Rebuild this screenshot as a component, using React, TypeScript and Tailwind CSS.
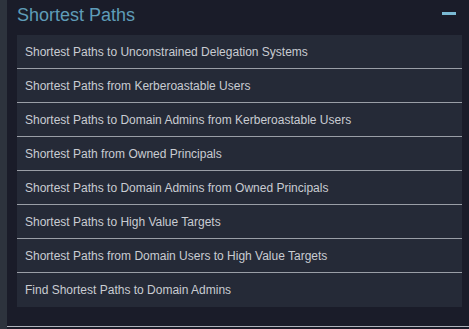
const items = [
  "Shortest Paths to Unconstrained Delegation Systems",
  "Shortest Paths from Kerberoastable Users",
  "Shortest Paths to Domain Admins from Kerberoastable Users",
  "Shortest Path from Owned Principals",
  "Shortest Paths to Domain Admins from Owned Principals",
  "Shortest Paths to High Value Targets",
  "Shortest Paths from Domain Users to High Value Targets",
  "Find Shortest Paths to Domain Admins",
];

export default function App() {
  return (
    <div className="flex h-[329px] w-[469px] overflow-hidden bg-[#1a1c29] font-['Liberation_Sans',Arial,sans-serif]">
      <div className="w-[7px] shrink-0 bg-[#2d333d]" />
      <div className="flex min-w-0 flex-1 flex-col">
        <div className="flex h-[35px] items-center justify-between pl-[10px] pr-[13px]">
          <h2 className="text-[18px] leading-none text-[#5f9cb8] pb-[6px]">Shortest Paths</h2>
          <span className="mb-[8px] block h-[3px] w-[14px] bg-[#7ab9d3]" />
        </div>
        <ul className="ml-[10px] mr-[7px] bg-[#252a37]">
          {items.map((t, i) => (
            <li
              key={t}
              className={
                "flex h-[34px] items-center px-[8px] text-[12px] text-[#c9ccd2] " +
                (i < items.length - 1 ? "border-b border-[#9a9ea6]" : "")
              }
            >
              {t}
            </li>
          ))}
        </ul>
        <div className="mt-auto mb-[2px] h-px bg-[#b0b4bc]" />
      </div>
    </div>
  );
}
